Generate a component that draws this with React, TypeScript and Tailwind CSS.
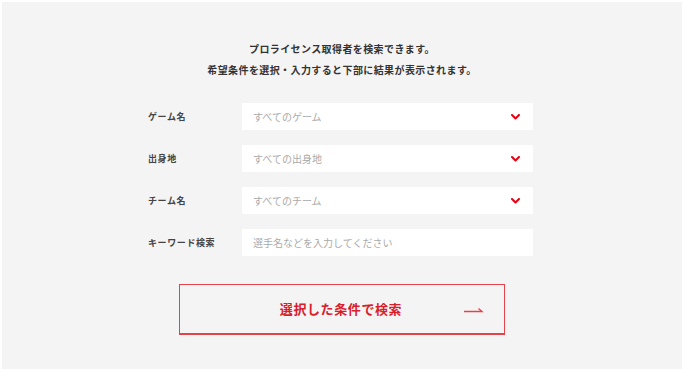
import React from 'react';

const fields = [
  { label: 'ゲーム名', placeholder: 'すべてのゲーム', select: true },
  { label: '出身地', placeholder: 'すべての出身地', select: true },
  { label: 'チーム名', placeholder: 'すべてのチーム', select: true },
  { label: 'キーワード検索', placeholder: '選手名などを入力してください', select: false },
];

function Chevron() {
  return (
    <svg width="9" height="6" viewBox="0 0 9 6" className="shrink-0">
      <path d="M1 1 L4.5 4.5 L8 1" fill="none" stroke="#e60012" strokeWidth="2" strokeLinecap="round" strokeLinejoin="round" />
    </svg>
  );
}

export default function App() {
  return (
    <div
      className="w-[684px] h-[371px] bg-white p-[2px]"
      style={{ fontFamily: '"Noto Sans CJK JP", "Noto Sans", sans-serif' }}
    >
      <div className="h-full bg-[#f4f4f4] flex flex-col items-center pt-[36px]">
        {/* Intro */}
        <div className="text-center text-[10px] leading-[21px] font-bold text-[#333] tracking-[0.4px]">
          <p>プロライセンス取得者を検索できます。</p>
          <p>希望条件を選択・入力すると下部に結果が表示されます。</p>
        </div>

        {/* Fields */}
        <div className="mt-[23px] flex flex-col gap-[15px] w-[385px] -ml-[3px]">
          {fields.map((f) => (
            <div key={f.label} className="flex items-center h-[27px]">
              <span className="w-[94px] text-[9px] font-bold text-[#444] tracking-[0.6px]">{f.label}</span>
              <div className="flex-1 h-full bg-white flex items-center justify-between pl-[11px] pr-[13px]">
                <span className="text-[10px] text-[#aaa]">{f.placeholder}</span>
                {f.select && <Chevron />}
              </div>
            </div>
          ))}
        </div>

        {/* Button */}
        <button className="mt-[28px] w-[326px] h-[51px] border-[1.5px] border-b-[2.5px] border-[#e5434c] flex items-center relative">
          <span className="flex-1 text-center text-[13px] font-bold text-[#d8202b] tracking-[0.6px] pr-[2px]">選択した条件で検索</span>
          <svg width="20" height="6" viewBox="0 0 20 6" className="absolute right-[20px] top-[22px]">
            <path d="M0 4.5 H18 L14.5 1.5" fill="none" stroke="#e5434c" strokeWidth="1.3" />
          </svg>
        </button>
      </div>
    </div>
  );
}
